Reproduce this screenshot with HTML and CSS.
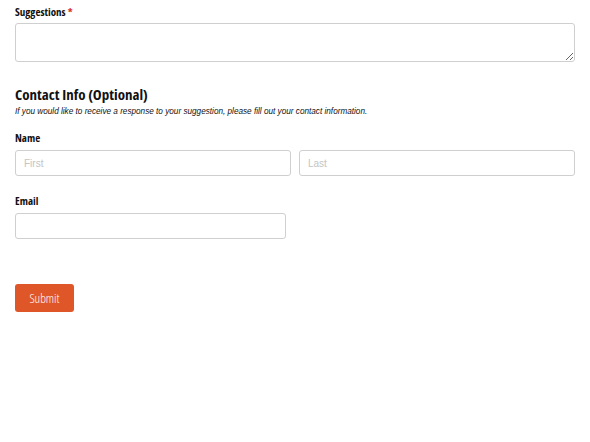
FILE: index.html
```html
<!DOCTYPE html>
<html lang="en">
<head>
    <meta charset="UTF-8">
    <title>Suggestions</title>
    <link rel="stylesheet" href="styles.css">
</head>
<body>
    <form class="form">
        <!-- Suggestions -->
        <div class="field">
            <label class="label">Suggestions <span class="req">*</span></label>
            <textarea class="textarea"></textarea>
        </div>

        <!-- Contact section -->
        <div class="section">
            <h2 class="section-title">Contact Info (Optional)</h2>
            <p class="section-desc">If you would like to receive a response to your suggestion, please fill out your contact information.</p>
        </div>

        <div class="field field-name">
            <label class="label">Name</label>
            <div class="name-row">
                <input class="input" type="text" placeholder="First">
                <input class="input" type="text" placeholder="Last">
            </div>
        </div>

        <div class="field field-email">
            <label class="label">Email</label>
            <input class="input input-half" type="email">
        </div>

        <div class="actions">
            <button class="submit" type="button">Submit</button>
        </div>
    </form>
</body>
</html>
```

FILE: styles.css
```css
body {
    margin: 0;
    background: #fff;
    font-family: "Open Sans", Arial, sans-serif;
    color: #111;
}

.form {
    padding: 4px 15px 0 15px;
}

.field {
    margin-bottom: 20px;
}

.field-name {
    margin-bottom: 17px;
}

.label {
    display: block;
    font-family: "Open Sans", sans-serif;
    font-stretch: 75%;
    font-weight: 700;
    font-size: 11px;
    line-height: 16px;
    margin-bottom: 3px;
}

.field-name .label,
.field-email .label {
    margin-bottom: 4px;
}

.req {
    color: #d9342b;
}

.textarea,
.input {
    box-sizing: border-box;
    display: block;
    border: 1px solid #cfcfcf;
    border-radius: 3px;
    background: #fff;
    margin: 0;
}

.textarea {
    width: 100%;
    height: 39px;
    resize: vertical;
}

.section {
    padding-top: 2px;
    margin-bottom: 12px;
}

.section-title {
    margin: 0;
    font-family: "Open Sans", sans-serif;
    font-stretch: 87%;
    font-weight: 700;
    font-size: 15px;
    line-height: 20px;
}

.section-desc {
    margin: 2px 0 0;
    font-family: "Liberation Sans", Arial, sans-serif;
    font-style: italic;
    font-size: 8.2px;
    line-height: 12px;
}

.name-row {
    display: flex;
    gap: 8px;
}

.input {
    flex: 1;
    height: 26px;
    padding: 0 8px;
    font-family: "Liberation Sans", Arial, sans-serif;
    font-size: 10px;
    color: #333;
}

.input::placeholder {
    color: #c4c4c4;
}

.input-half {
    width: 271px;
}

.actions {
    padding-top: 25px;
}

.submit {
    width: 59px;
    height: 28px;
    border: none;
    border-radius: 3px;
    background: #df5628;
    color: #fff;
    font-family: "Open Sans", sans-serif;
    font-stretch: 75%;
    font-weight: 300;
    font-size: 13px;
    cursor: pointer;
}
```
